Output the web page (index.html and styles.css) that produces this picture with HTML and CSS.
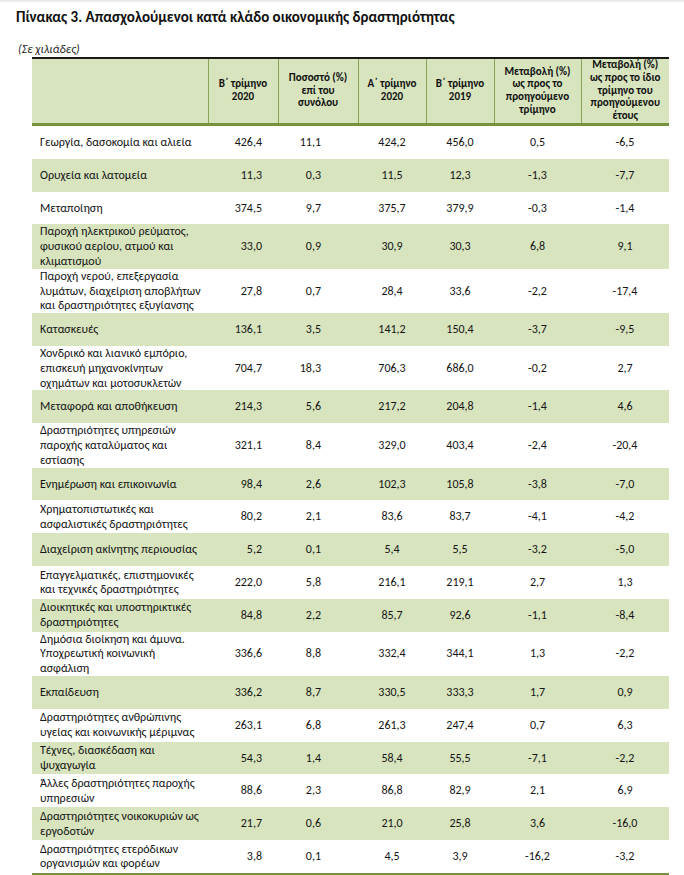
FILE: index.html
```html
<!DOCTYPE html>
<html lang="el">
<head>
<meta charset="utf-8">
<title>Πίνακας 3</title>
<link rel="stylesheet" href="styles.css">
</head>
<body>
<div class="topshade"></div>
<div class="page">
  <h1 class="title">Πίνακας 3. Απασχολούμενοι κατά κλάδο οικονομικής δραστηριότητας</h1>
  <div class="unit">(Σε χιλιάδες)</div>
  <table class="data">
    <colgroup>
      <col class="c-label">
      <col class="c-1">
      <col class="c-2">
      <col class="c-3">
      <col class="c-4">
      <col class="c-5">
      <col class="c-6">
    </colgroup>
    <thead>
      <tr>
        <th class="h-label"></th>
        <th>Β΄ τρίμηνο<br>2020</th>
        <th>Ποσοστό (%)<br>επί του<br>συνόλου</th>
        <th>Α΄ τρίμηνο<br>2020</th>
        <th>Β΄ τρίμηνο<br>2019</th>
        <th>Μεταβολή (%)<br>ως προς το<br>προηγούμενο<br>τρίμηνο</th>
        <th>Μεταβολή (%)<br>ως προς το ίδιο<br>τρίμηνο του<br>προηγούμενου<br>έτους</th>
      </tr>
    </thead>
    <tbody>
      <tr><td class="lbl">Γεωργία, δασοκομία και αλιεία</td><td class="n1">426,4</td><td class="n2">11,1</td><td class="nc">424,2</td><td class="nc">456,0</td><td class="nc">0,5</td><td class="nc">-6,5</td></tr>
      <tr><td class="lbl">Ορυχεία και λατομεία</td><td class="n1">11,3</td><td class="n2">0,3</td><td class="nc">11,5</td><td class="nc">12,3</td><td class="nc">-1,3</td><td class="nc">-7,7</td></tr>
      <tr><td class="lbl">Μεταποίηση</td><td class="n1">374,5</td><td class="n2">9,7</td><td class="nc">375,7</td><td class="nc">379,9</td><td class="nc">-0,3</td><td class="nc">-1,4</td></tr>
      <tr><td class="lbl">Παροχή ηλεκτρικού ρεύματος,<br>φυσικού αερίου, ατμού και<br>κλιματισμού</td><td class="n1">33,0</td><td class="n2">0,9</td><td class="nc">30,9</td><td class="nc">30,3</td><td class="nc">6,8</td><td class="nc">9,1</td></tr>
      <tr><td class="lbl">Παροχή νερού, επεξεργασία<br>λυμάτων, διαχείριση αποβλήτων<br>και δραστηριότητες εξυγίανσης</td><td class="n1">27,8</td><td class="n2">0,7</td><td class="nc">28,4</td><td class="nc">33,6</td><td class="nc">-2,2</td><td class="nc">-17,4</td></tr>
      <tr><td class="lbl">Κατασκευές</td><td class="n1">136,1</td><td class="n2">3,5</td><td class="nc">141,2</td><td class="nc">150,4</td><td class="nc">-3,7</td><td class="nc">-9,5</td></tr>
      <tr><td class="lbl">Χονδρικό και λιανικό εμπόριο,<br>επισκευή μηχανοκίνητων<br>οχημάτων και μοτοσυκλετών</td><td class="n1">704,7</td><td class="n2">18,3</td><td class="nc">706,3</td><td class="nc">686,0</td><td class="nc">-0,2</td><td class="nc">2,7</td></tr>
      <tr><td class="lbl">Μεταφορά και αποθήκευση</td><td class="n1">214,3</td><td class="n2">5,6</td><td class="nc">217,2</td><td class="nc">204,8</td><td class="nc">-1,4</td><td class="nc">4,6</td></tr>
      <tr><td class="lbl">Δραστηριότητες υπηρεσιών<br>παροχής καταλύματος και<br>εστίασης</td><td class="n1">321,1</td><td class="n2">8,4</td><td class="nc">329,0</td><td class="nc">403,4</td><td class="nc">-2,4</td><td class="nc">-20,4</td></tr>
      <tr><td class="lbl">Ενημέρωση και επικοινωνία</td><td class="n1">98,4</td><td class="n2">2,6</td><td class="nc">102,3</td><td class="nc">105,8</td><td class="nc">-3,8</td><td class="nc">-7,0</td></tr>
      <tr><td class="lbl">Χρηματοπιστωτικές και<br>ασφαλιστικές δραστηριότητες</td><td class="n1">80,2</td><td class="n2">2,1</td><td class="nc">83,6</td><td class="nc">83,7</td><td class="nc">-4,1</td><td class="nc">-4,2</td></tr>
      <tr><td class="lbl">Διαχείριση ακίνητης περιουσίας</td><td class="n1">5,2</td><td class="n2">0,1</td><td class="nc">5,4</td><td class="nc">5,5</td><td class="nc">-3,2</td><td class="nc">-5,0</td></tr>
      <tr><td class="lbl">Επαγγελματικές, επιστημονικές<br>και τεχνικές δραστηριότητες</td><td class="n1">222,0</td><td class="n2">5,8</td><td class="nc">216,1</td><td class="nc">219,1</td><td class="nc">2,7</td><td class="nc">1,3</td></tr>
      <tr><td class="lbl">Διοικητικές και υποστηρικτικές<br>δραστηριότητες</td><td class="n1">84,8</td><td class="n2">2,2</td><td class="nc">85,7</td><td class="nc">92,6</td><td class="nc">-1,1</td><td class="nc">-8,4</td></tr>
      <tr><td class="lbl">Δημόσια διοίκηση και άμυνα.<br>Υποχρεωτική κοινωνική<br>ασφάλιση</td><td class="n1">336,6</td><td class="n2">8,8</td><td class="nc">332,4</td><td class="nc">344,1</td><td class="nc">1,3</td><td class="nc">-2,2</td></tr>
      <tr><td class="lbl">Εκπαίδευση</td><td class="n1">336,2</td><td class="n2">8,7</td><td class="nc">330,5</td><td class="nc">333,3</td><td class="nc">1,7</td><td class="nc">0,9</td></tr>
      <tr><td class="lbl">Δραστηριότητες ανθρώπινης<br>υγείας και κοινωνικής μέριμνας</td><td class="n1">263,1</td><td class="n2">6,8</td><td class="nc">261,3</td><td class="nc">247,4</td><td class="nc">0,7</td><td class="nc">6,3</td></tr>
      <tr><td class="lbl">Τέχνες, διασκέδαση και<br>ψυχαγωγία</td><td class="n1">54,3</td><td class="n2">1,4</td><td class="nc">58,4</td><td class="nc">55,5</td><td class="nc">-7,1</td><td class="nc">-2,2</td></tr>
      <tr><td class="lbl">Άλλες δραστηριότητες παροχής<br>υπηρεσιών</td><td class="n1">88,6</td><td class="n2">2,3</td><td class="nc">86,8</td><td class="nc">82,9</td><td class="nc">2,1</td><td class="nc">6,9</td></tr>
      <tr><td class="lbl">Δραστηριότητες νοικοκυριών ως<br>εργοδοτών</td><td class="n1">21,7</td><td class="n2">0,6</td><td class="nc">21,0</td><td class="nc">25,8</td><td class="nc">3,6</td><td class="nc">-16,0</td></tr>
      <tr><td class="lbl">Δραστηριότητες ετερόδικων<br>οργανισμών και φορέων</td><td class="n1">3,8</td><td class="n2">0,1</td><td class="nc">4,5</td><td class="nc">3,9</td><td class="nc">-16,2</td><td class="nc">-3,2</td></tr>
    </tbody>
  </table>
</div>
</body>
</html>
```

FILE: styles.css
```css
html, body {
  margin: 0;
  padding: 0;
  background: #ffffff;
}

body {
  font-family: Carlito, Lato, "Liberation Sans", sans-serif;
  color: #151515;
}

.topshade {
  height: 3px;
  background: linear-gradient(#e4e4e4, #ffffff);
  margin-bottom: -3px;
}

.page {
  padding: 7px 0 0 16px;
}

.title {
  margin: 0;
  font-size: 15px;
  line-height: 20px;
  font-weight: 700;
  color: #111;
}

.unit {
  margin-top: 16px;
  padding-left: 2px;
  font-size: 12px;
  line-height: 13px;
  font-style: italic;
  color: #222;
}

.data {
  margin: 1px 0 0 16px;
  border-collapse: collapse;
  table-layout: fixed;
  width: 637px;
}

.c-label { width: 176px; }
.c-1 { width: 70px; }
.c-2 { width: 80px; }
.c-3 { width: 68px; }
.c-4 { width: 68px; }
.c-5 { width: 87px; }
.c-6 { width: 88px; }

.data thead tr {
  background: #d7e4bd;
  border-top: 2px solid #1a1a1a;
  border-bottom: 3px solid #76923c;
}

.data th {
  height: 64px;
  padding: 0 2px;
  font-size: 11px;
  line-height: 12.75px;
  font-weight: 700;
  text-align: center;
  vertical-align: middle;
  border-left: 1px solid #8aa35a;
  color: #111;
}

.data th.h-label {
  border-left: none;
}

.data tbody tr:nth-child(even) {
  background: #d7e4bd;
}

.data tbody tr:last-child {
  border-bottom: 3px solid #76923c;
}

.data td {
  height: 32.8px;
  padding: 0;
  font-size: 12px;
  line-height: 14.8px;
  vertical-align: middle;
  white-space: nowrap;
}

.data td.lbl {
  padding-left: 8px;
  text-align: left;
}

.data td.n1 {
  text-align: right;
  padding-right: 16px;
}

.data td.n2 {
  text-align: right;
  padding-right: 37px;
}

.data td.nc {
  text-align: center;
}
```
